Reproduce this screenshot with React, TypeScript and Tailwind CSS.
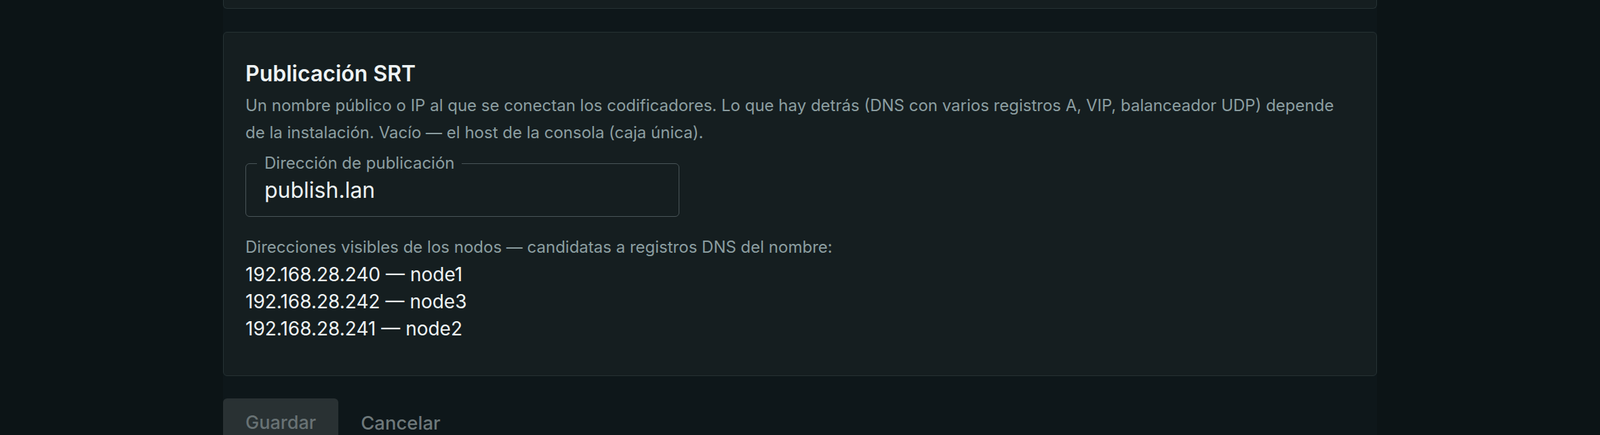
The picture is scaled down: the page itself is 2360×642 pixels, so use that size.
import React from 'react';

const nodes = [
  { ip: '192.168.28.240', name: 'node1' },
  { ip: '192.168.28.242', name: 'node3' },
  { ip: '192.168.28.241', name: 'node2' },
];

const App: React.FC = () => {
  return (
    <div
      className="min-h-[642px] w-full overflow-hidden bg-[#0c1416] text-[#e9eff0]"
      style={{ fontFamily: 'Inter, "Noto Sans", sans-serif' }}
    >
      <div className="mx-auto flex w-[1702px] flex-col bg-[#0e171a]">
        {/* tail of the previous card */}
        <div className="h-[13px] rounded-b-md border border-t-0 border-[#263234] bg-[#151e20]" />

        <section className="mt-[34px] rounded-md border border-[#263234] bg-[#151e20] px-[32px] pt-[41px] pb-[49px]">
          <h2 className="text-[32px] font-semibold leading-[40px] text-[#eef3f4]">Publicación SRT</h2>
          <p className="mt-[7px] text-[24px] leading-[40px] text-[#8c9ea1]">
            Un nombre público o IP al que se conectan los codificadores. Lo que hay detrás (DNS con varios registros A,
            VIP, balanceador UDP) depende de la instalación. Vacío — el host de la consola (caja única).
          </p>

          <fieldset className="mt-[10px] w-[640px] rounded-md border border-[#4a5659] px-[27px] pb-[20px]">
            <legend className="ml-[-11px] px-[11px] text-[24px] leading-[30px] text-[#8c9ea1]">
              Dirección de publicación
            </legend>
            <input
              readOnly
              value="publish.lan"
              className="mt-[7px] block h-[36px] w-full bg-transparent text-[32px] leading-[36px] text-[#eef3f4] outline-none"
            />
          </fieldset>

          <p className="mt-[25px] text-[24px] leading-[40px] text-[#8c9ea1]">
            Direcciones visibles de los nodos — candidatas a registros DNS del nombre:
          </p>
          <ul>
            {nodes.map((n) => (
              <li key={n.ip} className="text-[28px] leading-[40px] text-[#eef3f4]">
                {n.ip} — {n.name}
              </li>
            ))}
          </ul>
        </section>

        <div className="mt-[33px] flex items-start">
          <button
            disabled
            className="rounded-md bg-[#293133] px-[33px] pt-[16px] pb-[30px] text-[27px] leading-[40px] font-medium text-[#687274]"
          >
            Guardar
          </button>
          <button className="px-[33px] pt-[16px] pb-[30px] text-[27.5px] leading-[40px] font-medium text-[#6d787a]">
            Cancelar
          </button>
        </div>
      </div>
    </div>
  );
};

export default App;
